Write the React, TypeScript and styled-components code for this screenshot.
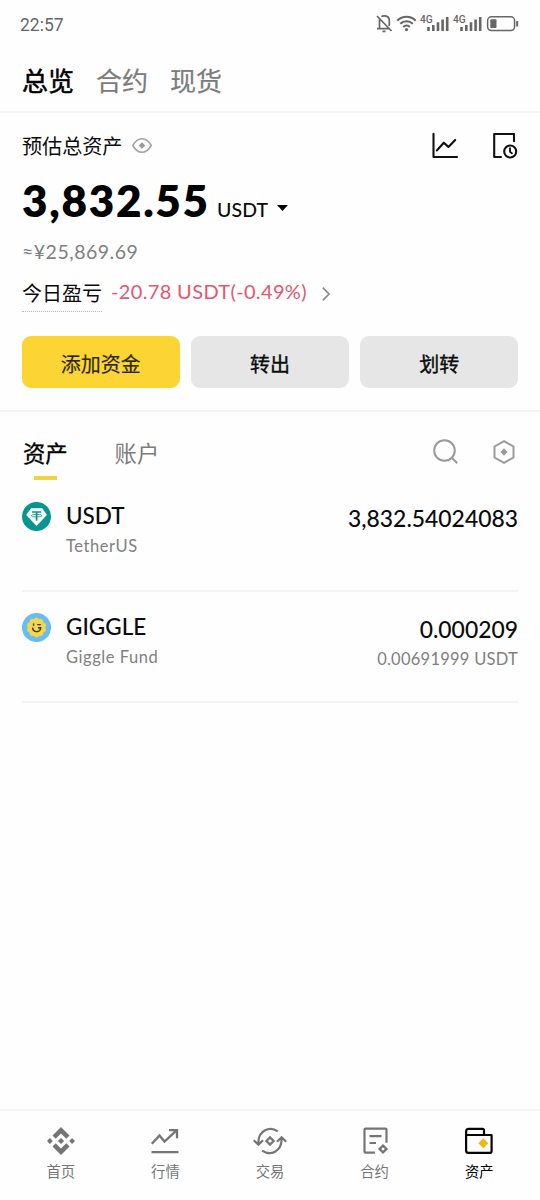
import React from "react";
import styled, { createGlobalStyle } from "styled-components";

const GlobalStyle = createGlobalStyle`
  * { box-sizing: border-box; }
  body { margin: 0; background: #fefefe; }
  svg { display: block; flex: none; overflow: visible; }
  button { font: inherit; border: 0; padding: 0; background: none; color: inherit; }
`;

const Screen = styled.div`
  width: 540px;
  height: 1200px;
  display: flex;
  flex-direction: column;
  background: #fefefe;
  color: #0b0b0b;
  font-family: Lato, "Noto Sans CJK SC", sans-serif;
  white-space: nowrap;
  overflow: hidden;
`;

const StatusBar = styled.header`
  height: 50px;
  padding: 0 21px 2px 20px;
  display: flex;
  align-items: center;
  justify-content: space-between;
  color: #666;
  font: 17.5px Roboto, sans-serif;
`;

const Clock = styled.span`
  padding-top: 2px;
`;

const TopTabs = styled.nav`
  height: 63px;
  padding: 0 22px;
  display: flex;
  align-items: center;
  gap: 22px;
  border-bottom: 2px solid #f4f4f4;
`;

const TopTab = styled.button<{ $active?: boolean }>`
  font-size: 26px;
  line-height: 60px;
  -webkit-text-stroke: ${(p) => (p.$active ? "0.5px" : "0.2px")} currentColor;
  color: ${(p) => (p.$active ? "#000" : "#7c7c7c")};
`;

const Summary = styled.section`
  height: 299px;
  padding: 17px 22px 0;
  border-bottom: 2px solid #f2f2f2;
`;

const SummaryHead = styled.div`
  height: 32px;
  display: flex;
  align-items: center;
  justify-content: space-between;
`;

const Title = styled.div`
  display: flex;
  align-items: center;
  gap: 10px;
  font-size: 20.1px;
  line-height: 32px;
`;

const Actions = styled.div<{ $gap: number }>`
  display: flex;
  align-items: center;
  gap: ${(p) => p.$gap}px;
`;

const Balance = styled.div`
  height: 74px;
  display: flex;
  align-items: baseline;
  line-height: 76px;
`;

const Total = styled.span`
  width: 195px;
  font-size: 44px;
  font-weight: 800;
  letter-spacing: 1.7px;
  color: #000;
`;

const Unit = styled.span`
  font-size: 19.5px;
  letter-spacing: 0.1px;
  font-weight: 500;
  margin-right: 9px;
`;

const Fiat = styled.div`
  height: 32px;
  line-height: 32px;
  font-size: 19.5px;
  letter-spacing: 0.5px;
  color: #808080;
`;

const Profit = styled.div`
  height: 44px;
  display: flex;
  align-items: flex-start;
`;

const ProfitLabel = styled.span`
  height: 44px;
  padding-top: 9px;
  font-size: 20px;
  line-height: 32px;
  border-bottom: 1px dotted #bbb;
`;

const ProfitValue = styled.span`
  margin: 7px 0 0 9px;
  width: 211px;
  font-size: 20px;
  line-height: 32px;
  letter-spacing: 0.35px;
  color: #e5566d;
`;

const Chevron = styled.svg`
  margin-top: 19px;
`;

const ButtonRow = styled.div`
  display: grid;
  grid-template-columns: repeat(3, 1fr);
  gap: 11.5px;
  margin-top: 24px;
`;

const ActionButton = styled.button<{ $primary?: boolean }>`
  height: 52px;
  padding-top: 2px;
  border-radius: 9px;
  background: ${(p) => (p.$primary ? "#fcd434" : "#e6e6e6")};
  color: ${(p) => (p.$primary ? "#2a2608" : "#0b0b0b")};
  font-size: 20px;
  -webkit-text-stroke: ${(p) => (p.$primary ? "0.15px" : "0.35px")} currentColor;
`;

const ListHead = styled.div`
  height: 69px;
  padding: 12px 25px 0 23px;
  display: flex;
  justify-content: space-between;
`;

const ListTabs = styled.div`
  display: flex;
  gap: 47px;
`;

const ListTab = styled.button<{ $active?: boolean }>`
  height: 57px;
  display: flex;
  flex-direction: column;
  align-items: center;
  font-size: 22.3px;
  line-height: 60px;
  -webkit-text-stroke: ${(p) => (p.$active ? "0.35px" : "0px")} currentColor;
  color: ${(p) => (p.$active ? "#000" : "#7c7c7c")};
`;

const TabMark = styled.i`
  flex: none;
  width: 23px;
  height: 4px;
  margin-top: -8px;
  background: #f2d33c;
`;

const ListTools = styled(Actions)`
  height: 55px;
`;

const AssetRow = styled.article`
  height: 111px;
  margin: 0 22px;
  padding-top: 21px;
  display: flex;
  border-bottom: 2px solid #f3f3f3;
`;

const Names = styled.div`
  flex: 1;
  margin-left: 15px;
`;

const Symbol = styled.div`
  font-size: 22.5px;
  line-height: 28px;
  font-weight: 500;
`;

const Sub = styled.div`
  font-size: 16.5px;
  line-height: 22px;
  letter-spacing: 0.55px;
  color: #808080;
  margin-top: 5px;
`;

const Amounts = styled.div`
  text-align: right;
  padding-top: 2px;
`;

const Amount = styled(Symbol)`
  font-size: 22.9px;
`;

const SubAmount = styled(Sub)`
  letter-spacing: 0.25px;
`;

const BottomNav = styled.nav`
  height: 91px;
  margin-top: auto;
  padding: 16px 8.5px 0;
  display: grid;
  grid-template-columns: repeat(5, 1fr);
  border-top: 2px solid #f6f6f6;
`;

const NavItem = styled.button<{ $active?: boolean }>`
  display: flex;
  flex-direction: column;
  align-items: center;
  justify-content: flex-start;
  font-size: 14.3px;
  line-height: 20px;
  gap: 7px;
  color: ${(p) => (p.$active ? "#000" : "#757575")};
`;

const StatusIcons = () => (
  <svg width="144" height="24" viewBox="375 12 144 24" fill="none" stroke="#666" strokeWidth="1.7">
    <path d="M377 16l14.5 15M379.5 19v9M377 28.6h12M389.3 26v-5.5c0-3.2-1.8-4.6-5.3-4.6-1 0-1.8.2-2.6.7M382.5 31.3h3" />
    <g strokeLinecap="butt" strokeWidth="2">
      <path d="M397.3 20.7c5.2-5.2 13.2-5.2 18.4 0M400.2 23.8c3.6-3.5 9-3.5 12.6 0M403.2 26.9c1.9-1.8 4.7-1.8 6.6 0" />
    </g>
    <circle cx="406.5" cy="29.6" r="1.6" fill="#666" stroke="none" />
    <g strokeWidth="2.6">
      <path d="M428.5 27v4M433.3 25v6M438 22.3V31M442.6 19.5V31M447.2 17v14" />
      <path d="M461.5 27v4M466.3 25v6M471 22.3V31M475.6 19.5V31M480.2 17v14" />
    </g>
    <g fill="#666" stroke="none" fontFamily="Roboto, sans-serif" fontSize="10.2" fontWeight="500">
      <text x="420" y="22.7">4G</text>
      <text x="453" y="22.7">4G</text>
    </g>
    <rect x="487.6" y="16.8" width="27" height="13.8" rx="3.8" strokeWidth="1.5" />
    <rect x="490.3" y="19.3" width="6.2" height="8.8" rx="1" fill="#666" stroke="none" />
    <path d="M517.2 21v5.5" strokeWidth="2" />
  </svg>
);

const EyeIcon = () => (
  <svg width="20" height="16" viewBox="0 0 20 16" fill="none" stroke="#a3a3a3" strokeWidth="1.6">
    <path d="M.8 7.5C3.3 3 6.3.7 10 .7s6.7 2.300 9.200 6.800c-2.500 4.500-5.500 6.800-9.200 6.800S3.300 12 .8 7.500z" strokeLinejoin="round" />
    <path d="M10 4.300 13.200 7.500 10 10.700 6.800 7.500z" fill="#9a9a9a" stroke="none" />
  </svg>
);

const ChartIcon = () => (
  <svg width="26" height="26" viewBox="0 0 26 26" fill="none" stroke="#111" strokeWidth="2.1" strokeLinecap="round" strokeLinejoin="round">
    <path d="M1.500 .8V24H25M4.800 17.500l7-7.800 4.600 4.200 6.800-7" />
  </svg>
);

const HistoryIcon = () => (
  <svg width="25" height="26" viewBox="0 0 25 26" fill="none" stroke="#111" strokeWidth="2.1" strokeLinecap="round" strokeLinejoin="round">
    <path d="M8 24H1.200V1h19.800v7.300" />
    <circle cx="17.200" cy="18.500" r="6" />
    <path d="M17 15.300v3.400l1.900 1.500" strokeWidth="1.9" />
  </svg>
);

const SearchIcon = () => (
  <svg width="25" height="25" viewBox="0 0 25 25" fill="none" stroke="#9a9a9a" strokeWidth="2">
    <circle cx="11.5" cy="11.5" r="10.3" />
    <path d="m18.800 18.800 5.400 5.400" />
  </svg>
);

const HexIcon = () => (
  <svg width="22" height="24" viewBox="0 0 22 24" fill="none" stroke="#9a9a9a" strokeWidth="2">
    <path d="M11 1.200 20.500 6.500v11L11 22.800 1.500 17.500v-11z" />
    <path d="M11 8.300 14.700 12 11 15.700 7.300 12z" fill="#9a9a9a" stroke="none" />
  </svg>
);

const TetherIcon = () => (
  <svg width="29" height="29" viewBox="0 0 29 29">
    <circle cx="14.5" cy="14.5" r="14.5" fill="#079591" />
    <path d="M9 6.200h11.200l4.700 6.700-10.300 11L4.200 12.900z" fill="#fff" />
    <g fill="none" stroke="#079591">
      <path d="M10 10h9.200M14.600 10v8.700" strokeWidth="1.7" />
      <ellipse cx="14.6" cy="13.7" rx="5.4" ry="1.3" strokeWidth="0.8" />
    </g>
  </svg>
);

const petals = Array.from({ length: 10 }, (_, i) => (i * Math.PI) / 5);

const GiggleIcon = () => (
  <svg width="29" height="29" viewBox="0 0 29 29">
    <circle cx="14.5" cy="14.5" r="14.5" fill="#65bdf0" />
    <g fill="#f5d64e">
      <circle cx="14.5" cy="14.5" r="8.8" />
      {petals.map((a) => (
        <circle key={a} cx={14.5 + 7.5 * Math.sin(a)} cy={14.5 - 7.5 * Math.cos(a)} r="2.4" />
      ))}
    </g>
    <g fill="none" stroke="#3d3620" strokeWidth="1.4">
      <path d="M11.600 10.500v2.300M15.200 11.600h3.600M10.700 14.600c0 5.400 8 5.400 8 .2h-2.700" />
    </g>
  </svg>
);

const HomeIcon = () => (
  <svg width="28" height="28" viewBox="0 0 28 28" fill="#757575">
    <path d="m14 0 8.500 8.500-3.200 3.200L14 6.400l-5.300 5.300-3.200-3.200zM14 28l-8.500-8.500 3.200-3.200 5.300 5.300 5.300-5.300 3.200 3.200zM14 10.900l3.100 3.100-3.100 3.100-3.100-3.100zM2.900 11.100 5.800 14l-2.900 2.900L0 14zM25.100 11.100 28 14l-2.900 2.900-2.900-2.900z" />
  </svg>
);

const MarketIcon = () => (
  <svg width="28" height="28" viewBox="0 0 28 28" fill="none" stroke="#757575" strokeWidth="2.3">
    <path d="M.8 16.800 8.500 8.600l5 6L25.300 3.700M18 3.200h8v8M.5 25.200h27" />
  </svg>
);

const TradeIcon = () => (
  <svg width="34" height="28" viewBox="0 0 34 28" fill="none" stroke="#757575" strokeWidth="2.2">
    <path d="M24.800 4.400C16.600-1.300 5.400 3.500 5.400 15.500v1.700M.8 13.200l4.600 4.600 4.600-4.600M9.200 23.600c8.200 5.700 19.400.9 19.400-11.100v-1.700M33.200 14.800l-4.600-4.600-4.600 4.600" />
    <path d="m17 10.400 3.600 3.600-3.600 3.600-3.600-3.600z" />
  </svg>
);

const FuturesIcon = () => (
  <svg width="26" height="28" viewBox="0 0 26 28" fill="none" stroke="#757575" strokeWidth="2.2">
    <path d="M13 25.700H3.500a1 1 0 0 1-1-1v-22a1 1 0 0 1 1-1h20a1 1 0 0 1 1 1v13M7.500 9.200h12M7.500 16h6.500" />
    <path d="m21 18.600 3.400 3.400-3.400 3.400-3.400-3.400z" strokeWidth="2.4" />
  </svg>
);

const WalletIcon = () => (
  <svg width="28" height="28" viewBox="0 0 28 28" fill="none" stroke="#050505" strokeWidth="2.2" strokeLinejoin="round">
    <path d="M1.100 8v15.500c0 1.500.8 2.400 2.300 2.400h21.200c1.200 0 2-.8 2-2V8H1.100zM1.100 8V4.500c0-1.500 1-2.700 2.500-2.700H17.500c1 0 1.500.5 1.500 1.500V8" />
    <path d="m18.300 11.300 5 5-5 5-5-5z" fill="#eeb90e" stroke="none" />
  </svg>
);

const navItems = [
  { label: "首页", icon: <HomeIcon /> },
  { label: "行情", icon: <MarketIcon /> },
  { label: "交易", icon: <TradeIcon /> },
  { label: "合约", icon: <FuturesIcon /> },
  { label: "资产", icon: <WalletIcon />, active: true },
];

const assets = [
  { symbol: "USDT", name: "TetherUS", amount: "3,832.54024083", value: "", icon: <TetherIcon /> },
  { symbol: "GIGGLE", name: "Giggle Fund", amount: "0.000209", value: "0.00691999 USDT", icon: <GiggleIcon /> },
];

export default function App() {
  return (
    <Screen lang="zh-CN">
      <GlobalStyle />
      <StatusBar>
        <Clock>22:57</Clock>
        <StatusIcons />
      </StatusBar>
      <TopTabs>
        <TopTab $active>总览</TopTab>
        <TopTab>合约</TopTab>
        <TopTab>现货</TopTab>
      </TopTabs>
      <Summary>
        <SummaryHead>
          <Title>
            预估总资产
            <EyeIcon />
          </Title>
          <Actions $gap={35}>
            <ChartIcon />
            <HistoryIcon />
          </Actions>
        </SummaryHead>
        <Balance>
          <Total>3,832.55</Total>
          <Unit>USDT</Unit>
          <svg width="11" height="12" viewBox="0 0 11 12" fill="#000">
            <path d="M0 0h11L5.500 6z" />
          </svg>
        </Balance>
        <Fiat>≈¥25,869.69</Fiat>
        <Profit>
          <ProfitLabel>今日盈亏</ProfitLabel>
          <ProfitValue>-20.78 USDT(-0.49%)</ProfitValue>
          <Chevron width="8" height="14" viewBox="0 0 8 14" fill="none" stroke="#8a8a8a" strokeWidth="1.7">
            <path d="m.8.7 6.200 6.300-6.200 6.300" />
          </Chevron>
        </Profit>
        <ButtonRow>
          <ActionButton $primary>添加资金</ActionButton>
          <ActionButton>转出</ActionButton>
          <ActionButton>划转</ActionButton>
        </ButtonRow>
      </Summary>
      <ListHead>
        <ListTabs>
          <ListTab $active>
            资产
            <TabMark />
          </ListTab>
          <ListTab>账户</ListTab>
        </ListTabs>
        <ListTools $gap={35}>
          <SearchIcon />
          <HexIcon />
        </ListTools>
      </ListHead>
      {assets.map((a) => (
        <AssetRow key={a.symbol}>
          {a.icon}
          <Names>
            <Symbol>{a.symbol}</Symbol>
            <Sub>{a.name}</Sub>
          </Names>
          <Amounts>
            <Amount>{a.amount}</Amount>
            {a.value && <SubAmount>{a.value}</SubAmount>}
          </Amounts>
        </AssetRow>
      ))}
      <BottomNav>
        {navItems.map((n) => (
          <NavItem key={n.label} $active={n.active}>
            {n.icon}
            {n.label}
          </NavItem>
        ))}
      </BottomNav>
    </Screen>
  );
}
